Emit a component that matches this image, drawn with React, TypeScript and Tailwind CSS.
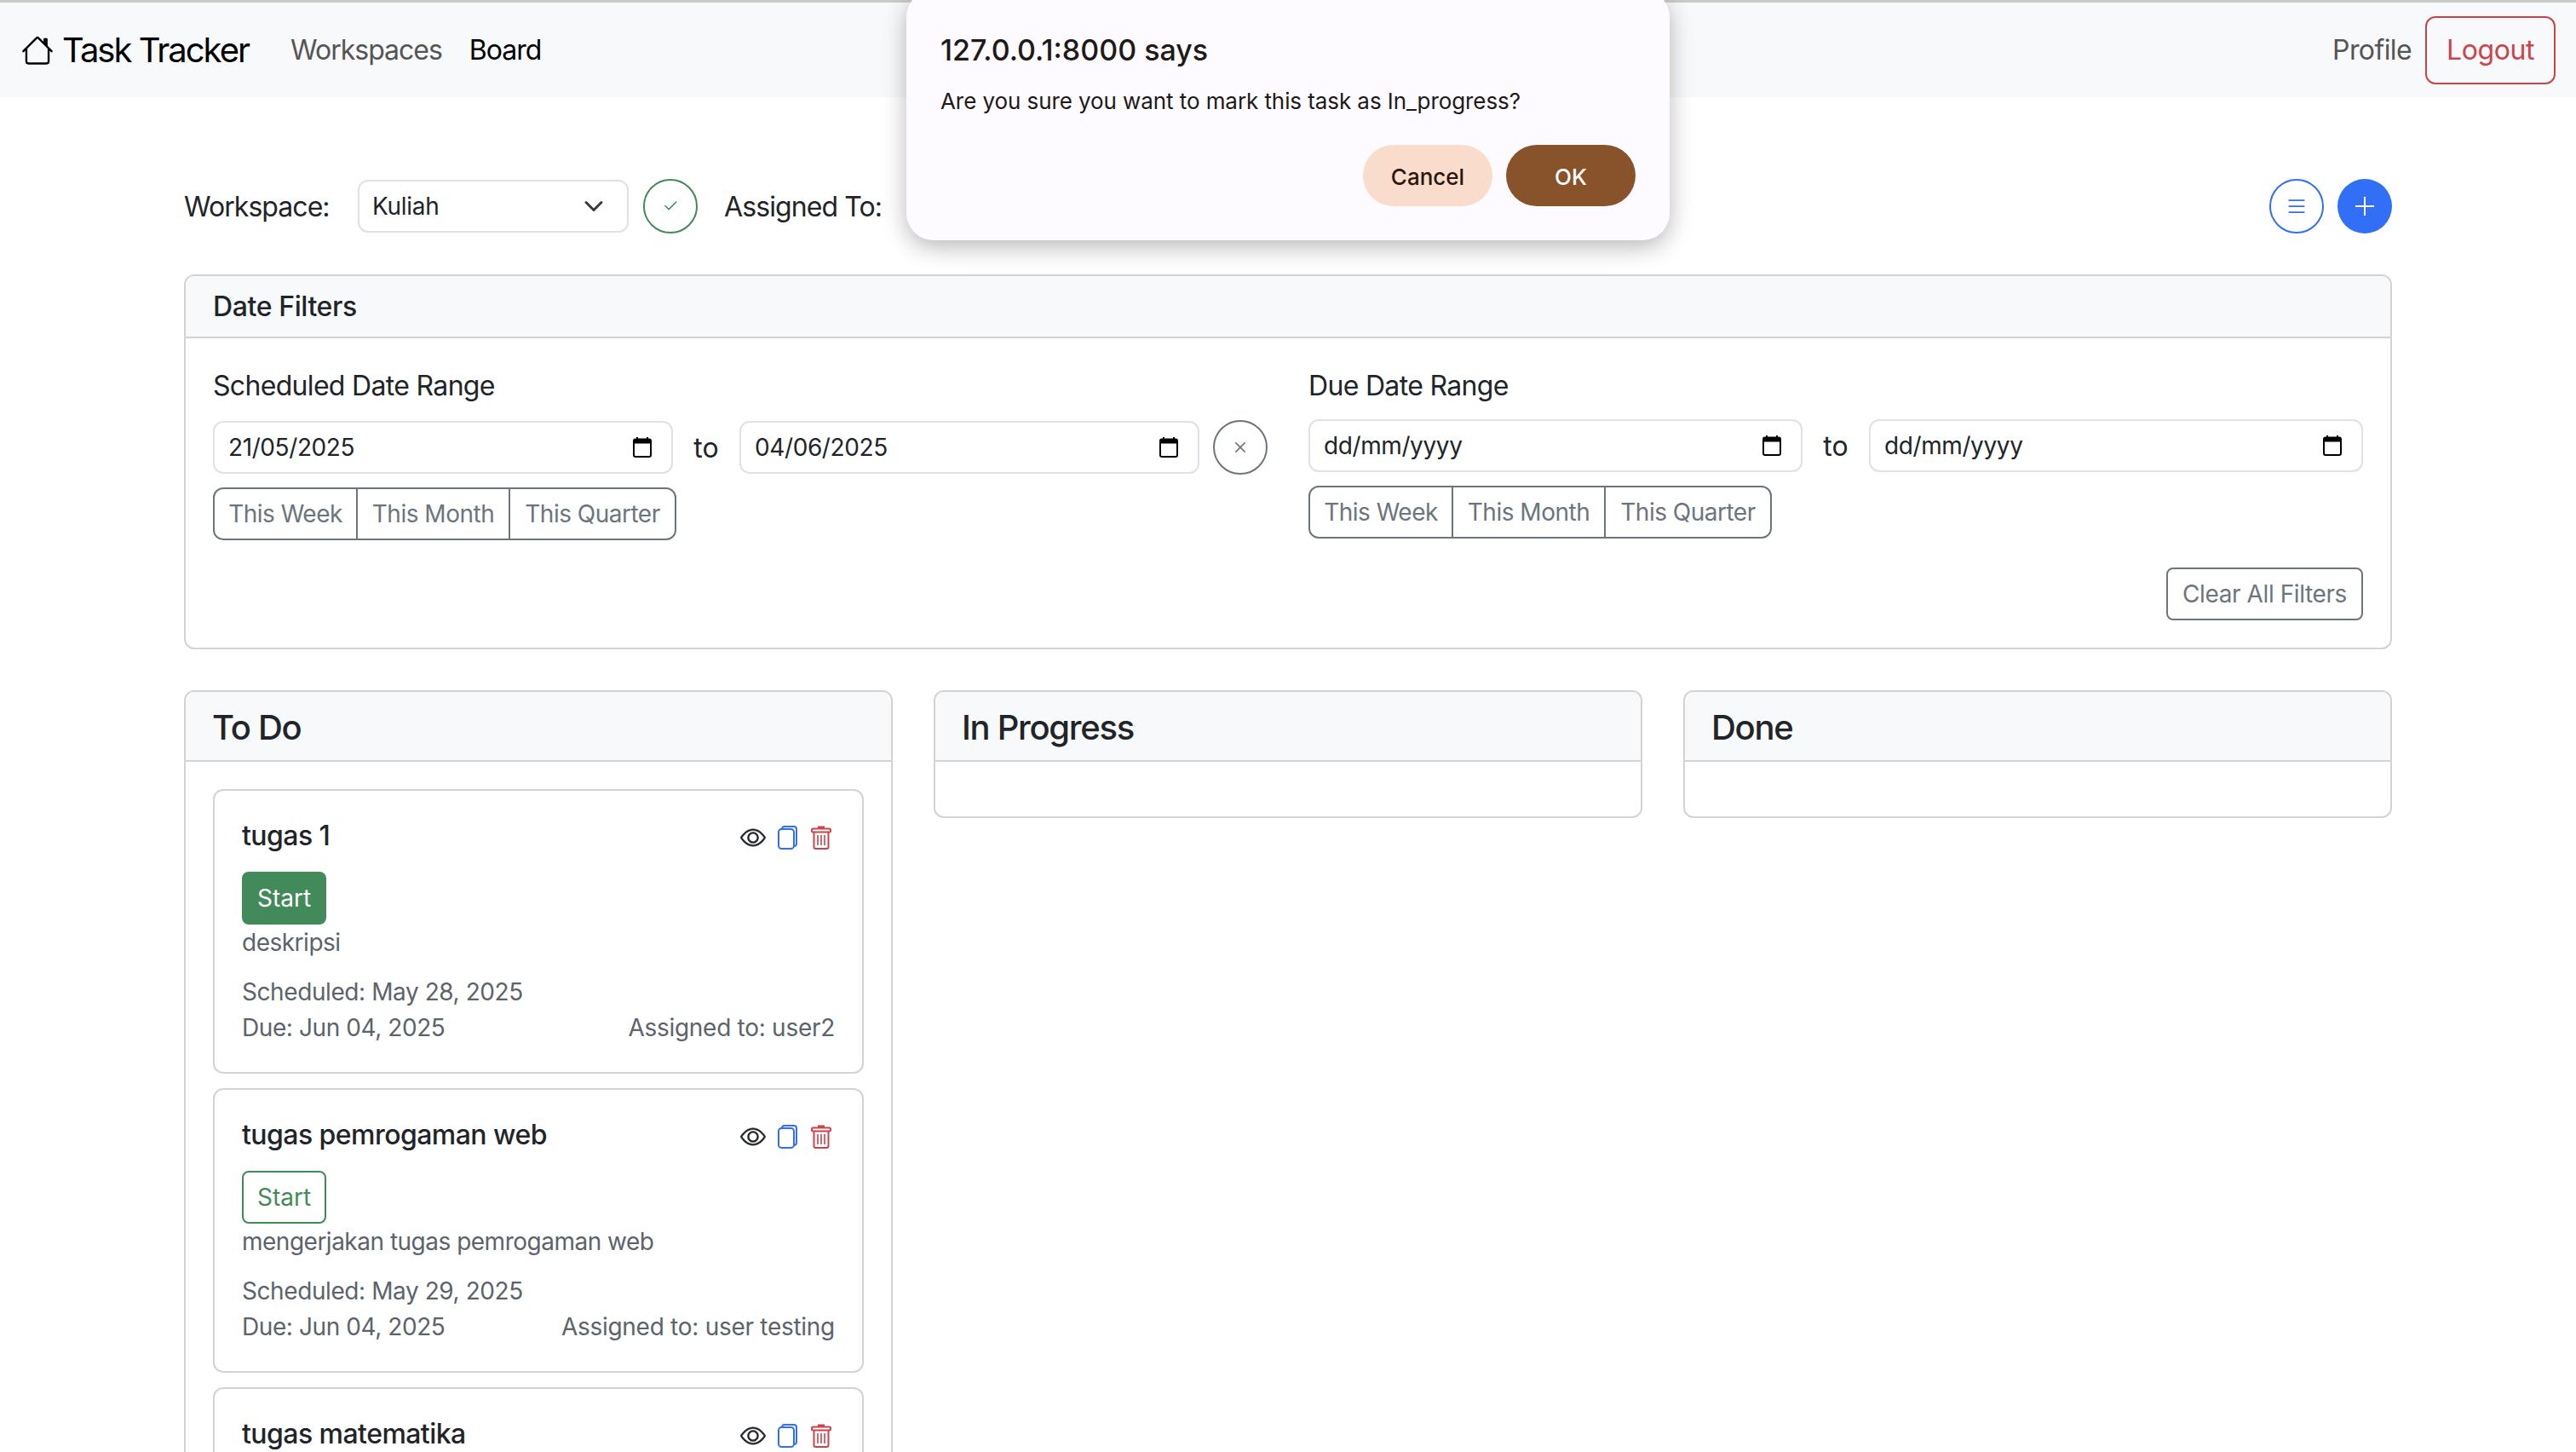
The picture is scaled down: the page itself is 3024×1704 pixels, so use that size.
import React from "react";
import { BsCheck2, BsEye, BsHouse, BsList, BsX } from "react-icons/bs";

type Task = {
  title: string;
  desc?: string;
  scheduled?: string;
  due?: string;
  user?: string;
  solid?: boolean;
};

// the third card runs off the bottom of the page, only its title shows
const tasks: Task[] = [
  { title: "tugas 1", desc: "deskripsi", scheduled: "May 28, 2025", due: "Jun 04, 2025", user: "user2", solid: true },
  { title: "tugas pemrogaman web", desc: "mengerjakan tugas pemrogaman web", scheduled: "May 29, 2025", due: "Jun 04, 2025", user: "user testing" },
  { title: "tugas matematika" },
];

function TrashIcon() {
  return (
    <svg viewBox="0 0 24 28" className="h-[28px] w-[24px]" fill="none" stroke="#cb444a" strokeWidth="2">
      <path d="M9 3V1.5h6V3" fill="#cb444a" />
      <rect x="1" y="3.5" width="22" height="4" rx="1.5" />
      <path d="M3.5 7.5V25a2 2 0 0 0 2 2h13a2 2 0 0 0 2-2V7.5" />
      <path d="M8 11v12M12 11v12M16 11v12" strokeWidth="1.6" />
    </svg>
  );
}

function CopyIcon() {
  return (
    <svg viewBox="0 0 23 28" className="h-[28px] w-[23px]" fill="none" stroke="#316ff6" strokeWidth="2">
      <rect x="1" y="4" width="18" height="23" rx="3.5" />
      <path d="M5 4V4a3 3 0 0 1 3-3h11a3 3 0 0 1 3 3v17a3 3 0 0 1-3 3" />
    </svg>
  );
}

function CalendarIcon() {
  return (
    <svg viewBox="0 0 22 24" className="h-[24px] w-[22px] shrink-0" fill="none">
      <path d="M5 0v3M17 0v3" stroke="#000" strokeWidth="2" />
      <rect x="1" y="2.5" width="20" height="20.5" rx="2" stroke="#000" strokeWidth="2" />
      <rect x="1" y="2.5" width="20" height="5" fill="#000" />
    </svg>
  );
}

function DateBox({ value, width }: { value: string; width: string }) {
  return (
    <div className={`flex h-[62px] items-center justify-between rounded-[12px] border-2 border-[#dee2e6] bg-white pl-[16px] pr-[23px] text-[28px] tracking-[-0.4px] text-[#212529] ${width}`}>
      <span>{value}</span>
      <CalendarIcon />
    </div>
  );
}

function RangeButtons() {
  return (
    <div className="flex h-[62px] w-[544px] text-[28px] tracking-[-0.5px] text-[#6c757d]">
      <div className="flex w-[170px] items-center justify-center rounded-l-[12px] border-2 border-[#6c757d]">This Week</div>
      <div className="-ml-[2px] flex w-[181px] items-center justify-center border-2 border-[#6c757d]">This Month</div>
      <div className="-ml-[2px] flex w-[197px] items-center justify-center rounded-r-[12px] border-2 border-[#6c757d]">This Quarter</div>
    </div>
  );
}

function TaskCard({ title, desc, scheduled, due, user, solid }: Task) {
  return (
    <div className="h-[334px] shrink-0 rounded-[12px] border-2 border-[#d3d3d3] px-[32px] pt-[32px]">
      <div className="flex h-[42px] items-center justify-between">
        <h5 className="text-[32px] font-medium tracking-[-0.55px] text-[#212529]">{title}</h5>
        <div className="flex items-center pr-[4px] pt-[4px]">
          <BsEye className="h-[30px] w-[30px] text-[#212529]" stroke="currentColor" strokeWidth="0.25" />
          <span className="ml-[14px] flex">
            <CopyIcon />
          </span>
          <span className="ml-[16px] flex">
            <TrashIcon />
          </span>
        </div>
      </div>
      {desc && (
        <>
          <button
            className={
              solid
                ? "mt-[21px] block h-[62px] w-[99px] rounded-[8px] bg-[#428a5a] text-[28px] text-white"
                : "mt-[21px] block h-[62px] w-[99px] rounded-[8px] border-2 border-[#428a5a] text-[28px] text-[#428a5a]"
            }
          >
            Start
          </button>
          <p className="text-[28px] leading-[42px] tracking-[-0.5px] text-[#5c636a]">{desc}</p>
          <p className="mt-[16px] text-[28px] leading-[42px] tracking-[-0.42px] text-[#5c636a]">Scheduled: {scheduled}</p>
          <div className="flex justify-between text-[28px] leading-[42px] tracking-[-0.42px] text-[#5c636a]">
            <span>Due: {due}</span>
            <span className="tracking-[-0.28px]">Assigned to: {user}</span>
          </div>
        </>
      )}
    </div>
  );
}

function Column({ title, children }: { title: string; children?: React.ReactNode }) {
  return (
    <div className="flex w-[832px] flex-col self-start rounded-[12px] border-2 border-[#d3d3d3]">
      <div className="flex h-[82px] items-center rounded-t-[10px] border-b-2 border-[#d3d3d3] bg-[#f8f9fa] px-[31px] pt-[4px] text-[40px] font-medium tracking-[-1.3px] text-[#212529]">
        {title}
      </div>
      <div className="flex flex-col gap-[17px] p-[32px]">{children}</div>
    </div>
  );
}

export default function App() {
  return (
    <div className="relative h-[1704px] w-[3024px] overflow-hidden bg-white font-['Inter',sans-serif] text-[#212529]">
      <nav className="flex h-[114px] items-center border-t-[3px] border-[#c9cbc9] bg-[#f8f9fa] pl-[25px] pr-[24px]">
        <BsHouse className="h-[38px] w-[38px] text-black" />
        <span className="ml-[10px] text-[40px] tracking-[-2px] text-black">Task Tracker</span>
        <span className="ml-[49px] text-[32px] tracking-[-1px] text-[#555]">Workspaces</span>
        <span className="ml-[32px] text-[32px] tracking-[-1px] text-black">Board</span>
        <span className="ml-auto text-[32px] tracking-[-0.6px] text-[#555]">Profile</span>
        <button className="ml-[16px] h-[80px] w-[153px] rounded-[12px] border-2 border-[#cb444a] text-[32px] tracking-[-0.4px] text-[#cb444a]">Logout</button>
      </nav>

      <main className="px-[216px] pt-[96px]">
        <div className="flex h-[64px] items-center">
          <span className="w-[204px] pt-[2px] text-[32px] tracking-[-0.95px]">Workspace:</span>
          <div className="flex h-[62px] w-[318px] items-center justify-between rounded-[12px] border-2 border-[#dee2e6] pl-[15px] pr-[27px] text-[28px] tracking-[-0.3px]">
            <span>Kuliah</span>
            <svg viewBox="0 0 16 16" className="h-[24px] w-[24px]" fill="none" stroke="#343a40" strokeWidth="2" strokeLinecap="round" strokeLinejoin="round">
              <path d="m2 5 6 6 6-6" />
            </svg>
          </div>
          <div className="ml-[17px] flex h-[64px] w-[64px] items-center justify-center rounded-full border-2 border-[#428a5a]">
            <BsCheck2 className="h-[20px] w-[20px] text-[#2f7a49]" />
          </div>
          <span className="ml-[31px] pt-[2px] text-[32px] tracking-[-0.9px]">Assigned To:</span>
          <div className="ml-auto flex h-[64px] w-[64px] items-center justify-center rounded-full border-2 border-[#316ff6]">
            <BsList className="h-[28px] w-[28px] text-[#316ff6]" />
          </div>
          <div className="ml-[16px] flex h-[64px] w-[64px] items-center justify-center rounded-full bg-[#316ff6]">
            <svg viewBox="0 0 22 22" className="h-[22px] w-[22px]" stroke="#fff" strokeWidth="2">
              <path d="M11 0v22M0 11h22" />
            </svg>
          </div>
        </div>

        <section className="mt-[48px] h-[440px] rounded-[12px] border-2 border-[#d3d3d3]">
          <div className="flex h-[73px] items-center rounded-t-[10px] border-b-2 border-[#d3d3d3] bg-[#f8f9fa] px-[32px] text-[32px] font-medium tracking-[-0.4px]">
            Date Filters
          </div>
          <div className="flex px-[32px] pt-[32px]">
            <div className="w-[1286px]">
              <p className="h-[48px] text-[32px] leading-[48px] tracking-[-0.68px]">Scheduled Date Range</p>
              <div className="mt-[16px] flex items-center">
                <DateBox value="21/05/2025" width="w-[540px]" />
                <span className="w-[78px] pt-[2px] text-center text-[32px]">to</span>
                <DateBox value="04/06/2025" width="w-[540px]" />
                <div className="ml-[16px] flex h-[64px] w-[64px] items-center justify-center rounded-full border-2 border-[#6c757d]">
                  <BsX className="h-[28px] w-[28px] text-[#6c757d]" />
                </div>
              </div>
              <div className="mt-[15px]">
                <RangeButtons />
              </div>
            </div>
            <div className="w-[1238px]">
              <p className="h-[48px] text-[32px] leading-[48px] tracking-[-0.68px]">Due Date Range</p>
              <div className="mt-[15px] flex items-center">
                <DateBox value="dd/mm/yyyy" width="w-[580px]" />
                <span className="w-[78px] pt-[2px] text-center text-[32px]">to</span>
                <DateBox value="dd/mm/yyyy" width="w-[580px]" />
              </div>
              <div className="mt-[16px]">
                <RangeButtons />
              </div>
              <div className="mt-[34px] flex justify-end">
                <button className="h-[62px] w-[231px] rounded-[8px] border-2 border-[#6c757d] text-[28px] tracking-[-0.4px] text-[#6c757d]">Clear All Filters</button>
              </div>
            </div>
          </div>
        </section>

        <div className="mt-[48px] flex gap-[48px]">
          <Column title="To Do">
            {tasks.map((task) => (
              <TaskCard key={task.title} {...task} />
            ))}
          </Column>
          <Column title="In Progress" />
          <Column title="Done" />
        </div>
      </main>

      <div className="absolute left-[1064px] top-[-12px] h-[294px] w-[896px] rounded-[32px] bg-[#fdfbff] shadow-[0_8px_28px_rgba(0,0,0,0.28)]">
        <p className="absolute left-[40px] top-[49px] text-[34px] font-medium leading-[44px] text-[#201a17]">127.0.0.1:8000 says</p>
        <p className="absolute left-[40px] top-[113px] text-[26px] leading-[36px] tracking-[-0.08px] text-[#201a17]">Are you sure you want to mark this task as In_progress?</p>
        <div className="absolute right-[40px] top-[182px] flex gap-[16px]">
          <button className="h-[72px] w-[152px] rounded-full bg-[#f9dccc] pt-[2px] text-[26px] font-medium text-[#2c160c]">Cancel</button>
          <button className="h-[72px] w-[152px] rounded-full bg-[#88522a] pt-[2px] text-[26px] font-medium text-white">OK</button>
        </div>
      </div>
    </div>
  );
}
